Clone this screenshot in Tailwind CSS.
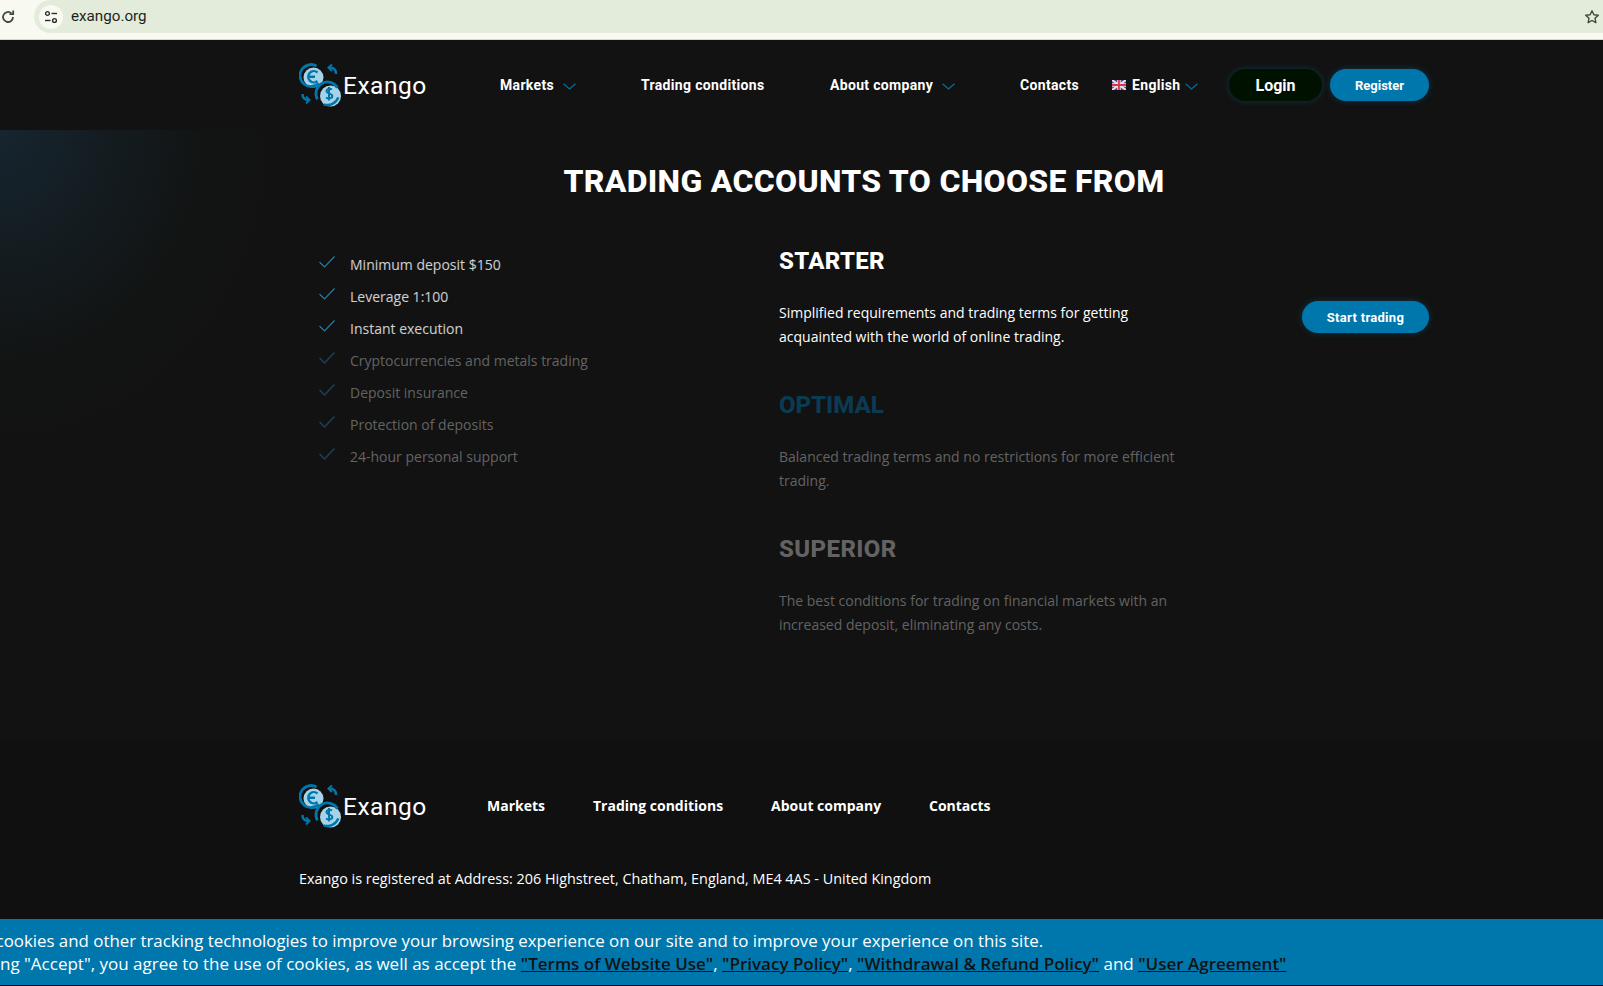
<!doctype html>
<html lang="en">
<head>
    <meta charset="UTF-8">
    <title>Exango</title>
    <script src="https://cdn.jsdelivr.net/npm/@tailwindcss/browser@4"></script>
</head>
<body class="h-[986px] overflow-hidden bg-[#121212] font-['Open_Sans',sans-serif] text-white">
    <div class="relative h-[986px] overflow-hidden">
        <!-- browser bar -->
        <div class="h-[40px] bg-[#f8faf2] border-b border-[#d8d8d0]">
            <div class="h-[33px] flex items-center text-[#1f1f1f]">
                <svg class="w-[16px] h-[16px] shrink-0" viewBox="0 0 16 16" fill="none" stroke="#3f4a3c" stroke-width="1.800"><path d="M13 8a5 5 0 1 1-1.600-3.700"/><path d="M13.200 1.500v3.700H9.500"/></svg>
                <div class="ml-[18px] flex-1 h-[33px] rounded-l-full bg-[#e3ecda] flex items-center pl-[5px]">
                    <div class="w-[24px] h-[24px] rounded-full bg-[#f8faf2] flex items-center justify-center">
                        <svg class="w-[14px] h-[14px]" viewBox="0 0 14 14" fill="none" stroke="#2b2b2b" stroke-width="1.400"><circle cx="3.500" cy="3.500" r="1.900"/><path d="M7.500 3.500h5.500"/><circle cx="10.500" cy="10.500" r="1.900"/><path d="M1 10.500h5.500"/></svg>
                    </div>
                    <span class="ml-[8px] text-[15.200px] font-['Roboto',sans-serif]">exango.org</span>
                    <svg class="ml-auto mr-[3px] w-[16px] h-[16px]" viewBox="0 0 16 16" fill="none" stroke="#3f4a3c" stroke-width="1.400" stroke-linejoin="round"><path d="M8 1.800l1.900 4 4.400.5-3.300 3 .9 4.400L8 11.500l-3.900 2.200.9-4.400-3.300-3 4.400-.5z"/></svg>
                </div>
            </div>
        </div>

        <!-- header -->
        <header class="h-[90px] w-[1130px] ml-[299px] flex items-center font-['Roboto',sans-serif] font-bold text-[14px] tracking-[0.33px]">
            <a class="flex items-center w-[201px]">
                <svg class="w-[44px] h-[44px] shrink-0" viewBox="0 0 44 44" fill="none">
                    <circle cx="14.500" cy="14.500" r="10" fill="#a6d3e8"/>
                    <path d="M19.800 20.300A11 11 0 1 1 17.500 3" stroke="#0077ac" stroke-width="2.800"/>
                    <path d="M18.500 9.500a5.600 5.600 0 1 0 0 8.500M9 13.700h7" stroke="#0077ac" stroke-width="2.400"/>
                    <circle cx="31.500" cy="33" r="10.500" fill="#a6d3e8"/>
                    <path d="M18.500 36.250A11.500 11.500 0 0 1 38.500 24.750" stroke="#0077ac" stroke-width="2.800"/>
                    <path d="M24.600 41.300A11.500 11.500 0 0 0 39.300 34.400" stroke="#0077ac" stroke-width="2.400"/>
                    <path d="M33 26.500c-2-1.300-5.500-.8-5.500 1.600 0 3.200 5.800 1.900 5.800 5 0 2.600-3.800 3-6.300 1.500M30 24v13.500" stroke="#0077ac" stroke-width="2"/>
                    <path d="M37 11c0-4-2.200-6.500-6.500-6.500" stroke="#0077ac" stroke-width="2.400"/>
                    <path d="M33 1.500L29.500 4.500 33 8" stroke="#0077ac" stroke-width="2"/>
                    <path d="M3.500 31c0 3.500 2 6 6 6" stroke="#0077ac" stroke-width="2.400"/>
                    <path d="M7 33.500l3.500 3.500L7 40.500" stroke="#0077ac" stroke-width="2"/>
                </svg>
                <span class="text-[24.500px] leading-none font-normal tracking-[0.5px] mt-[3px]">Exango</span>
            </a>
            <a class="flex items-center w-[141px]">Markets
                <svg class="ml-[9px] w-[13px] h-[7px] mt-[3px]" viewBox="0 0 13 7" fill="none" stroke="#0a6c99" stroke-width="1.200"><path d="M.5.700l6 5.300 6-5.300"/></svg>
            </a>
            <a class="w-[189px]">Trading conditions</a>
            <a class="flex items-center w-[190px]">About company
                <svg class="ml-[9px] w-[13px] h-[7px] mt-[3px]" viewBox="0 0 13 7" fill="none" stroke="#0a6c99" stroke-width="1.200"><path d="M.5.700l6 5.300 6-5.300"/></svg>
            </a>
            <a class="w-[92px]">Contacts</a>
            <a class="flex items-center w-[117px]">
                <svg class="w-[14px] h-[10px] mr-[6px]" viewBox="0 0 14 10"><rect width="14" height="10" fill="#3d4f8f"/><path d="M0 0l14 10M14 0L0 10" stroke="#f3dfe6" stroke-width="2"/><path d="M7 0v10M0 5h14" stroke="#f3dfe6" stroke-width="3.400"/><path d="M7 0v10M0 5h14" stroke="#d8334f" stroke-width="1.800"/></svg>
                English
                <svg class="ml-[5px] w-[13px] h-[7px] mt-[3px]" viewBox="0 0 13 7" fill="none" stroke="#0a6c99" stroke-width="1.200"><path d="M.5.700l6 5.300 6-5.300"/></svg>
            </a>
            <a class="w-[93px] h-[32px] rounded-full bg-[#001100] flex items-center justify-center text-[16px] tracking-normal pt-[1px] shadow-[0_0_6px_rgba(0,119,172,0.35)]">Login</a>
            <a class="ml-[8px] w-[99px] h-[32px] rounded-full bg-[#0077ac] flex items-center justify-center text-[13px] tracking-normal pt-[1px] shadow-[0_0_6px_rgba(0,119,172,0.35)]">Register</a>
        </header>

        <!-- accounts -->
        <main class="h-[611px] bg-[radial-gradient(ellipse_290px_330px_at_0_0,#16252f_0%,#121414_70%,#121212_100%)]">
            <div class="w-[1130px] ml-[299px]">
                <h1 class="pt-[30px] h-[102px] text-center text-[32px] leading-[42px] font-extrabold font-['Roboto',sans-serif] tracking-[0.3px]">TRADING ACCOUNTS TO CHOOSE FROM</h1>
                <div class="flex">
                    <ul class="w-[480px] pl-[20px] pt-[17px] text-[14px] leading-[32px]">
                        <li class="flex items-center h-[32px] text-white/80"><svg class="w-[16px] h-[12px] mr-[15px] -mt-[7px]" viewBox="0 0 16 12" fill="none" stroke="#2b7ea6" stroke-width="1.100"><path d="M.5 6l5 5L15.500.5"/></svg>Minimum deposit $150</li>
                        <li class="flex items-center h-[32px] text-white/80"><svg class="w-[16px] h-[12px] mr-[15px] -mt-[7px]" viewBox="0 0 16 12" fill="none" stroke="#2b7ea6" stroke-width="1.100"><path d="M.5 6l5 5L15.500.5"/></svg>Leverage 1:100</li>
                        <li class="flex items-center h-[32px] text-white/80"><svg class="w-[16px] h-[12px] mr-[15px] -mt-[7px]" viewBox="0 0 16 12" fill="none" stroke="#2b7ea6" stroke-width="1.100"><path d="M.5 6l5 5L15.500.5"/></svg>Instant execution</li>
                        <li class="flex items-center h-[32px] text-white/35"><svg class="w-[16px] h-[12px] mr-[15px] -mt-[7px]" viewBox="0 0 16 12" fill="none" stroke="#1d4a60" stroke-width="1.100"><path d="M.5 6l5 5L15.500.5"/></svg>Cryptocurrencies and metals trading</li>
                        <li class="flex items-center h-[32px] text-white/35"><svg class="w-[16px] h-[12px] mr-[15px] -mt-[7px]" viewBox="0 0 16 12" fill="none" stroke="#1d4a60" stroke-width="1.100"><path d="M.5 6l5 5L15.500.5"/></svg>Deposit insurance</li>
                        <li class="flex items-center h-[32px] text-white/35"><svg class="w-[16px] h-[12px] mr-[15px] -mt-[7px]" viewBox="0 0 16 12" fill="none" stroke="#1d4a60" stroke-width="1.100"><path d="M.5 6l5 5L15.500.5"/></svg>Protection of deposits</li>
                        <li class="flex items-center h-[32px] text-white/35"><svg class="w-[16px] h-[12px] mr-[15px] -mt-[7px]" viewBox="0 0 16 12" fill="none" stroke="#1d4a60" stroke-width="1.100"><path d="M.5 6l5 5L15.500.5"/></svg>24-hour personal support</li>
                    </ul>
                    <div class="w-[410px] pt-[14px] text-[14px] leading-[24px]">
                        <section class="h-[144px]">
                            <h2 class="text-[24px] leading-[30px] font-extrabold font-['Roboto',sans-serif] tracking-[0.3px] mb-[25px]">STARTER</h2>
                            <p>Simplified requirements and trading terms for getting<br>acquainted with the world of online trading.</p>
                        </section>
                        <section class="h-[144px]">
                            <h2 class="text-[24px] leading-[30px] font-extrabold font-['Roboto',sans-serif] text-[#0b3b52] mb-[25px]">OPTIMAL</h2>
                            <p class="text-white/35">Balanced trading terms and no restrictions for more efficient<br>trading.</p>
                        </section>
                        <section>
                            <h2 class="text-[24px] leading-[30px] font-extrabold font-['Roboto',sans-serif] tracking-[0.4px] text-white/35 mb-[25px]">SUPERIOR</h2>
                            <p class="text-white/35">The best conditions for trading on financial markets with an<br>increased deposit, eliminating any costs.</p>
                        </section>
                    </div>
                    <div class="flex-1 flex justify-end pt-[69px]">
                        <a class="w-[127px] h-[32px] rounded-full bg-[#0077ac] flex items-center justify-center text-[13px] pt-[1px] font-bold font-['Roboto',sans-serif] tracking-[0.3px] shadow-[0_0_6px_rgba(0,119,172,0.35)]">Start trading</a>
                    </div>
                </div>
            </div>
        </main>

        <!-- footer -->
        <footer class="h-[245px] bg-[#101010]">
            <div class="w-[1130px] ml-[299px] pt-[43px]">
                <div class="flex items-center h-[44px] font-bold text-[14px]">
                    <a class="flex items-center w-[188px]">
                        <svg class="w-[44px] h-[44px] shrink-0" viewBox="0 0 44 44" fill="none">
                            <circle cx="14.500" cy="14.500" r="10" fill="#a6d3e8"/>
                            <path d="M19.800 20.300A11 11 0 1 1 17.500 3" stroke="#0077ac" stroke-width="2.800"/>
                            <path d="M18.500 9.500a5.600 5.600 0 1 0 0 8.500M9 13.700h7" stroke="#0077ac" stroke-width="2.400"/>
                            <circle cx="31.500" cy="33" r="10.500" fill="#a6d3e8"/>
                            <path d="M18.500 36.250A11.500 11.500 0 0 1 38.500 24.750" stroke="#0077ac" stroke-width="2.800"/>
                            <path d="M24.600 41.300A11.500 11.500 0 0 0 39.300 34.400" stroke="#0077ac" stroke-width="2.400"/>
                            <path d="M33 26.500c-2-1.300-5.500-.8-5.500 1.600 0 3.200 5.800 1.900 5.800 5 0 2.600-3.800 3-6.300 1.500M30 24v13.500" stroke="#0077ac" stroke-width="2"/>
                            <path d="M37 11c0-4-2.200-6.500-6.500-6.500" stroke="#0077ac" stroke-width="2.400"/>
                            <path d="M33 1.500L29.500 4.500 33 8" stroke="#0077ac" stroke-width="2"/>
                            <path d="M3.500 31c0 3.500 2 6 6 6" stroke="#0077ac" stroke-width="2.400"/>
                            <path d="M7 33.500l3.500 3.500L7 40.500" stroke="#0077ac" stroke-width="2"/>
                        </svg>
                        <span class="text-[24.500px] leading-none font-normal font-['Roboto',sans-serif] tracking-[0.5px] mt-[3px]">Exango</span>
                    </a>
                    <a class="w-[106px] pb-[2px]">Markets</a>
                    <a class="w-[178px] pb-[2px]">Trading conditions</a>
                    <a class="w-[158px] pb-[2px]">About company</a>
                    <a class="pb-[2px]">Contacts</a>
                </div>
                <p class="mt-[39px] text-[14.400px] leading-[24px]">Exango is registered at Address: 206 Highstreet, Chatham, England, ME4 4AS - United Kingdom</p>
            </div>
        </footer>

        <!-- cookie banner over the page bottom -->
        <div class="absolute left-0 right-0 bottom-0 h-[67px] bg-[#0077ac] border-b border-black overflow-hidden pt-[10px] text-[17px] leading-[23px] whitespace-nowrap">
            <p class="-ml-[66px] text-[16.850px]">We use cookies and other tracking technologies to improve your browsing experience on our site and to improve your experience on this site.</p>
            <p class="-ml-[62px]">By clicking "Accept", you agree to the use of cookies, as well as accept the <a class="text-[#121212] font-semibold underline">"Terms of Website Use"</a>, <a class="text-[#121212] font-semibold underline">"Privacy Policy"</a>, <a class="text-[#121212] font-semibold underline">"Withdrawal &amp; Refund Policy"</a> and <a class="text-[#121212] font-semibold underline">"User Agreement"</a></p>
        </div>
    </div>
</body>
</html>
